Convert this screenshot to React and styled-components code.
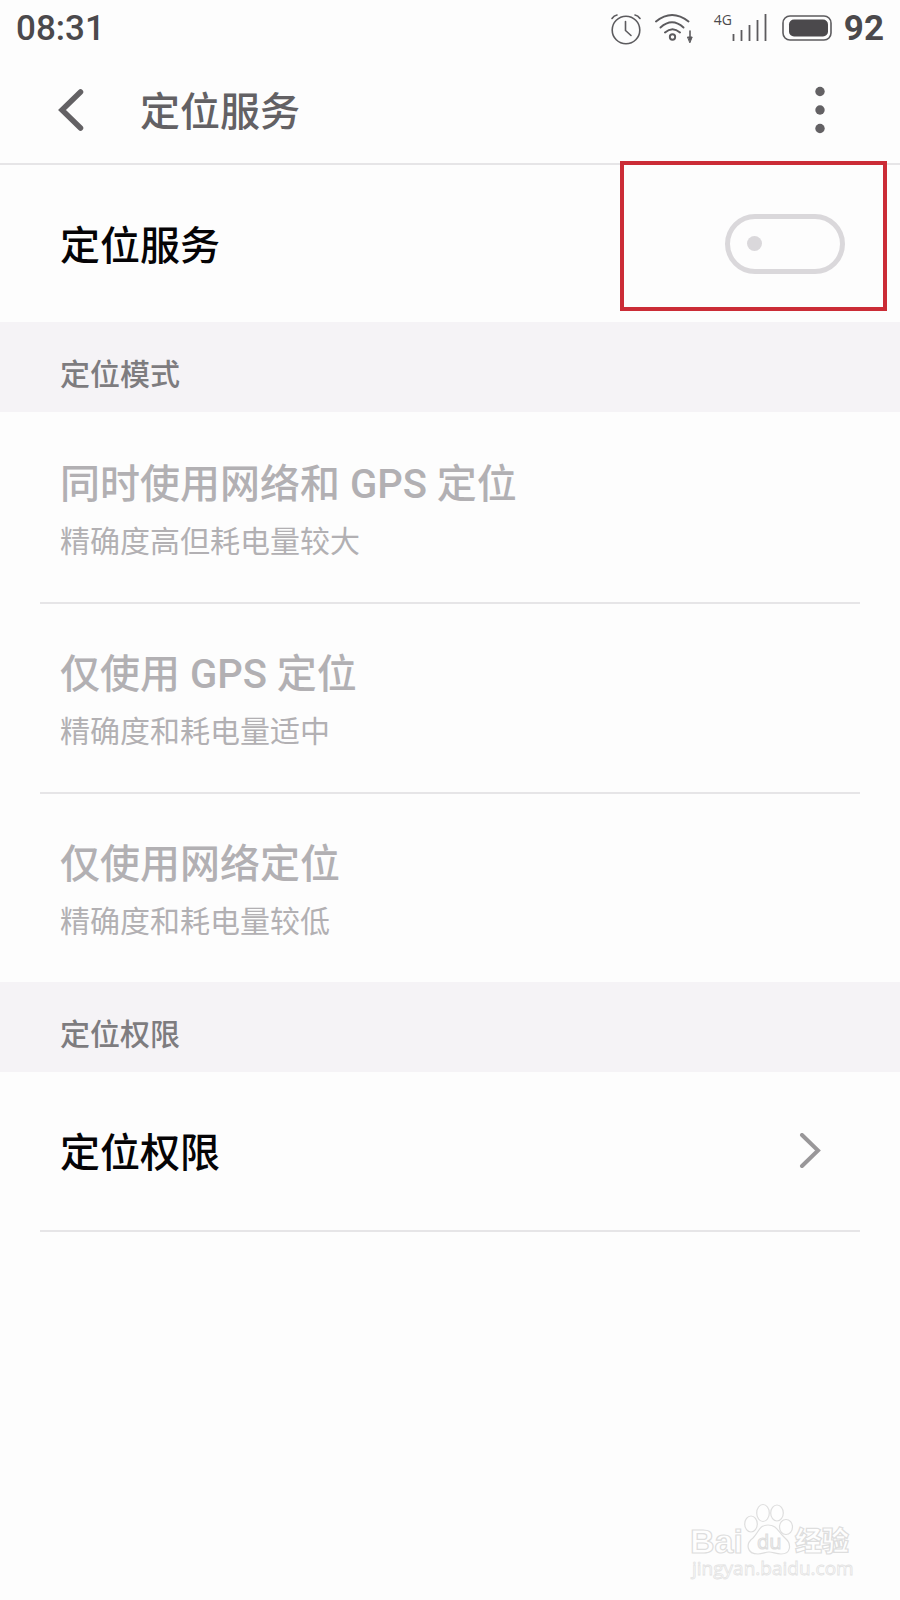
import React, { useState } from "react";
import styled, { createGlobalStyle } from "styled-components";

const GlobalStyle = createGlobalStyle`
  * {
    box-sizing: border-box;
  }
  body {
    margin: 0;
    background: #fdfdfd;
    font-family: Roboto, "Noto Sans CJK SC", sans-serif;
  }
  button {
    border: 0;
    padding: 0;
    background: none;
    font: inherit;
    color: inherit;
    text-align: left;
  }
`;

const modes = [
  { title: "同时使用网络和 GPS 定位", detail: "精确度高但耗电量较大" },
  { title: "仅使用 GPS 定位", detail: "精确度和耗电量适中" },
  { title: "仅使用网络定位", detail: "精确度和耗电量较低" },
];

const AlarmIcon = () => (
  <svg width="32" height="34" viewBox="0 0 32 34" fill="none" stroke="#5c5b5e" strokeWidth="1.6" strokeLinecap="round">
    <circle cx="16" cy="19" r="13.8" />
    <path d="M15.5 10.5v9l5.5 5M2 7.5Q4 4.5 7 4M25 4q3 .5 5 3.5" />
  </svg>
);

const WifiIcon = () => (
  <svg width="40" height="34" viewBox="0 0 40 34" fill="none" stroke="#5c5b5e" strokeWidth="1.9" strokeLinecap="round">
    <path d="M2 10.5Q18 -2.5 34.5 10.5M6.5 16.5Q18 6 29.5 16.5M11 21.5q7.5-6.5 15 0" />
    <circle cx="18.5" cy="26" r="2.7" />
    <path d="M36 20v8" strokeWidth="1.6" />
    <path d="M33.8 26h4.4L36 31.5z" fill="#5c5b5e" strokeWidth="1" />
  </svg>
);

const SignalIcon = () => (
  <svg width="36" height="28" viewBox="0 0 36 28" stroke="#5c5b5e" strokeWidth="1.8">
    <path d="M1.5 20v7M9.5 16v11M17.5 11v16M25.5 6v21M33.500 0v27" />
  </svg>
);

const BatteryIcon = () => (
  <svg width="50" height="26" viewBox="0 0 50 26">
    <rect x="1" y="1" width="48" height="24" rx="7" fill="none" stroke="#5c5b5e" strokeWidth="1.6" />
    <rect x="7" y="4.5" width="39" height="17" rx="5" fill="#4b494c" />
  </svg>
);

const Watermark = () => (
  <svg width="164" height="80" viewBox="0 0 164 80" fill="#fefefe" stroke="#dedede" strokeWidth="1.2" aria-label="Baidu 经验">
    <ellipse cx="61" cy="22" rx="6.3" ry="8" />
    <ellipse cx="73" cy="11" rx="6.3" ry="8.5" />
    <ellipse cx="87" cy="11" rx="6.3" ry="8" />
    <ellipse cx="96" cy="25" rx="6.5" ry="7.5" />
    <path d="M78 23C69 23 69 30 63 36C55 42 57 52 68 52C73 52 75 50 79 50C83 50 86 52 91 52C101 52 102 42 95 36C88 30 87 23 78 23Z" />
    <text x="0" y="51" fontSize="34" fontWeight="700" fontFamily="Liberation Sans">Bai</text>
    <text x="67" y="47" fontSize="20" fontFamily="Open Sans">du</text>
    <text x="105" y="49" fontSize="27" fontWeight="900" fontFamily="Noto Sans CJK SC">经验</text>
    <text x="2" y="73" fontSize="19" fontFamily="Open Sans" stroke="#e3e3e3" strokeWidth="0.8">jingyan.baidu.com</text>
  </svg>
);

export default function App() {
  const [enabled, setEnabled] = useState(false);

  return (
    <Screen>
      <GlobalStyle />
      <StatusBar>
        <Clock>08:31</Clock>
        <StatusIcons>
          <AlarmIcon />
          <WifiIcon />
          <Network>
            <NetworkType>4G</NetworkType>
            <SignalIcon />
          </Network>
          <BatteryIcon />
          <span>92</span>
        </StatusIcons>
      </StatusBar>

      <Header>
        <BackButton aria-label="返回">
          <svg width="28" height="44" viewBox="0 0 28 44" fill="none" stroke="#636164" strokeWidth="5.5" strokeLinecap="round">
            <path d="M23.5 4L5 22l18.5 18" />
          </svg>
        </BackButton>
        <PageTitle>定位服务</PageTitle>
        <MenuButton aria-label="更多">
          <svg width="10" height="48" viewBox="0 0 10 48" fill="#636164">
            <circle cx="5" cy="5.5" r="4.7" />
            <circle cx="5" cy="24" r="4.7" />
            <circle cx="5" cy="42.5" r="4.7" />
          </svg>
        </MenuButton>
      </Header>

      <main>
        <SwitchRow>
          <RowTitle as="label" htmlFor="location">定位服务</RowTitle>
          <Switch
            id="location"
            type="checkbox"
            role="switch"
            checked={enabled}
            onChange={(e) => setEnabled(e.target.checked)}
          />
          <Highlight />
        </SwitchRow>

        <SectionTitle>定位模式</SectionTitle>
        {modes.map((mode) => (
          <ModeRow key={mode.title} disabled={!enabled}>
            <RowTitle $muted={!enabled}>{mode.title}</RowTitle>
            <Detail>{mode.detail}</Detail>
          </ModeRow>
        ))}

        <SectionTitle>定位权限</SectionTitle>
        <LinkRow href="#permissions">
          <RowTitle>定位权限</RowTitle>
          <svg width="22" height="36" viewBox="0 0 22 36" fill="none" stroke="#999799" strokeWidth="4" strokeLinecap="round">
            <path d="M3 2l16 15.5L3 33" />
          </svg>
        </LinkRow>
      </main>

      <Footer>
        <Watermark />
      </Footer>
    </Screen>
  );
}

const Screen = styled.div`
  display: flex;
  flex-direction: column;
  min-height: 100vh;
`;

const StatusBar = styled.div`
  display: flex;
  align-items: center;
  justify-content: space-between;
  height: 56px;
  padding: 0 16px;
  color: #4b494c;
  font-size: 35px;
  line-height: 56px;
`;

const Clock = styled.time`
  padding-top: 2px;
  font-weight: 500;
`;

const StatusIcons = styled.div`
  display: flex;
  align-items: center;
  gap: 12px;
  font-weight: 700;

  > span {
    padding-top: 2px;
  }
`;

const Network = styled.div`
  display: flex;
  align-items: center;
  padding-left: 8px;
  margin-right: 2px;
`;

const NetworkType = styled.span`
  align-self: flex-start;
  font-family: "Open Sans", sans-serif;
  font-size: 14px;
  font-weight: 400;
  line-height: 12px;
`;

const Header = styled.header`
  display: flex;
  align-items: center;
  height: 109px;
  padding: 0 75px 0 57px;
  border-bottom: 2px solid #e6e5e7;
`;

const BackButton = styled.button`
  display: flex;
  width: 83px;
`;

const PageTitle = styled.h1`
  flex: 1;
  margin: 0;
  padding-top: 6px;
  color: #636164;
  font-size: 40px;
  font-weight: 500;
  line-height: 56px;
`;

const MenuButton = styled.button`
  display: flex;
`;

const SwitchRow = styled.div`
  position: relative;
  display: flex;
  align-items: center;
  justify-content: space-between;
  height: 157px;
  padding: 0 55px 0 60px;
`;

const RowTitle = styled.span`
  padding-top: 6px;
  color: ${(p) => (p.$muted ? "#b2b0b3" : "#050406")};
  font-size: 40px;
  font-weight: 500;
  line-height: 56px;
`;

const Switch = styled.input`
  appearance: none;
  display: flex;
  align-items: center;
  width: 120px;
  height: 60px;
  margin: 0;
  padding: 0 17px;
  border: 5px solid #dad8db;
  border-radius: 30px;

  &::before {
    content: "";
    width: 15px;
    height: 15px;
    border-radius: 50%;
    background: #dad8db;
  }
  &:checked {
    justify-content: flex-end;
  }
`;

const Highlight = styled.div`
  position: absolute;
  top: -4px;
  right: 13px;
  width: 267px;
  height: 150px;
  border: 4px solid #cb2c36;
  pointer-events: none;
`;

const SectionTitle = styled.h2`
  height: 90px;
  margin: 0;
  padding: 33px 60px 0;
  background: #f5f3f6;
  color: #7e7c7f;
  font-size: 30px;
  font-weight: 500;
  line-height: 40px;
`;

const ModeRow = styled.button`
  display: flex;
  flex-direction: column;
  justify-content: center;
  width: calc(100% - 80px);
  height: 190px;
  margin: 0 40px;
  padding: 6px 20px 0;
  border-top: 2px solid transparent;

  & + & {
    border-top-color: #e6e5e7;
  }
`;

const Detail = styled.span`
  color: #b2b0b3;
  font-size: 30px;
  font-weight: 400;
  line-height: 58px;
`;

const LinkRow = styled.a`
  display: flex;
  align-items: center;
  justify-content: space-between;
  height: 160px;
  margin: 0 40px;
  padding: 0 39px 0 20px;
  border-bottom: 2px solid #e6e5e7;
  text-decoration: none;
`;

const Footer = styled.footer`
  display: flex;
  justify-content: flex-end;
  margin-top: auto;
  padding: 0 46px 18px;
`;
